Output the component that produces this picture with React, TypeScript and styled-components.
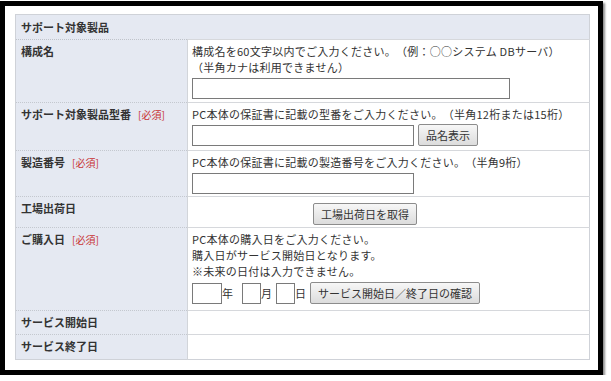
import React from "react";
import styled, { createGlobalStyle } from "styled-components";

const Global = createGlobalStyle`
  html, body { margin: 0; padding: 0; background: #fff; }
  body {
    font-family: "Noto Sans CJK JP", "Noto Sans", sans-serif;
    color: #333;
    font-size: 11px;
    text-spacing-trim: space-all;
  }
  * { box-sizing: border-box; }
`;

const Frame = styled.div`
  margin-top: 1px;
  width: 603px;
  height: 374px;
  border: 5px solid #000;
  box-shadow: 2px 2px 2px rgba(0, 0, 0, 0.45);
  background: #fff;
  padding: 8px 8px 10px 10px;
`;

const Table = styled.table`
  width: 575px;
  border-collapse: collapse;
  border: 1px solid #cfd2d8;
  font-size: 11px;
  line-height: 16px;
`;

const Row = styled.tr<{ $h: number }>`
  height: ${(p) => p.$h}px;
`;

const HeadCell = styled.th`
  background: #e5e9f2;
  text-align: left;
  font-weight: bold;
  padding: 0 5px 1px;
  border-bottom: 1px dotted #bfc3ca;
`;

const Label = styled.th`
  width: 172px;
  background: #e5e9f2;
  text-align: left;
  font-weight: bold;
  vertical-align: top;
  padding: 3px 5px 0;
  border-top: 1px dotted #c4c8cf;
  border-right: 1px solid #d2d5da;
  white-space: nowrap;
`;

const Value = styled.td<{ $middle?: boolean }>`
  background: #fff;
  vertical-align: ${(p) => (p.$middle ? "middle" : "top")};
  padding: 3px 4px 0;
  border-top: 1px solid #d6d8dc;
`;

const Req = styled.span`
  color: #c83232;
  font-weight: normal;
  font-size: 10px;
  margin-left: 7px;
`;

const Line = styled.div`
  white-space: nowrap;
  letter-spacing: 0.25px;
`;

const Controls = styled.div<{ $top?: number; $left?: number; $gap?: number }>`
  display: flex;
  align-items: center;
  gap: ${(p) => p.$gap ?? 4}px;
  margin-top: ${(p) => p.$top ?? 2}px;
  margin-left: ${(p) => p.$left ?? 0}px;
`;

const TextInput = styled.input<{ $w: number }>`
  width: ${(p) => p.$w}px;
  height: 21px;
  border: 1px solid #7a7a7a;
  background: #fff;
  margin: 0;
  padding: 0 2px;
  font: inherit;
  border-radius: 0;
  outline: none;
`;

const Btn = styled.button`
  height: 22px;
  padding: 0 7px;
  border: 1px solid #8c8c8c;
  border-radius: 2px;
  background: linear-gradient(#f7f7f7, #dcdcdc);
  color: #333;
  font-family: inherit;
  font-size: 11px;
  line-height: 20px;
  margin: 0;
`;

const Unit = styled.span<{ $after: number }>`
  width: 11px;
  margin-right: ${(p) => p.$after}px;
`;

export default function App() {
  return (
    <>
      <Global />
      <Frame>
        <Table>
          <tbody>
            <Row $h={25}>
              <HeadCell colSpan={2}>サポート対象製品</HeadCell>
            </Row>
            <Row $h={63}>
              <Label>構成名</Label>
              <Value>
                <Line>構成名を60文字以内でご入力ください。（例：○○システム DBサーバ）</Line>
                <Line>（半角カナは利用できません）</Line>
                <Controls $top={3}>
                  <TextInput $w={318} />
                </Controls>
              </Value>
            </Row>
            <Row $h={48}>
              <Label>
                サポート対象製品型番<Req>[必須]</Req>
              </Label>
              <Value>
                <Line>PC本体の保証書に記載の型番をご入力ください。（半角12桁または15桁）</Line>
                <Controls $top={2}>
                  <TextInput $w={222} />
                  <Btn>品名表示</Btn>
                </Controls>
              </Value>
            </Row>
            <Row $h={46}>
              <Label>
                製造番号<Req>[必須]</Req>
              </Label>
              <Value>
                <Line>PC本体の保証書に記載の製造番号をご入力ください。（半角9桁）</Line>
                <Controls $top={3}>
                  <TextInput $w={222} />
                </Controls>
              </Value>
            </Row>
            <Row $h={31}>
              <Label>工場出荷日</Label>
              <Value $middle>
                <Controls $top={0} $left={121}>
                  <Btn>工場出荷日を取得</Btn>
                </Controls>
              </Value>
            </Row>
            <Row $h={83}>
              <Label>
                ご購入日<Req>[必須]</Req>
              </Label>
              <Value>
                <Line>PC本体の購入日をご入力ください。</Line>
                <Line>購入日がサービス開始日となります。</Line>
                <Line>※未来の日付は入力できません。</Line>
                <Controls $top={3} $gap={0}>
                  <TextInput $w={30} />
                  <Unit $after={9}>年</Unit>
                  <TextInput $w={19} />
                  <Unit $after={4}>月</Unit>
                  <TextInput $w={19} />
                  <Unit $after={4}>日</Unit>
                  <Btn>サービス開始日／終了日の確認</Btn>
                </Controls>
              </Value>
            </Row>
            <Row $h={24}>
              <Label>サービス開始日</Label>
              <Value />
            </Row>
            <Row $h={25}>
              <Label>サービス終了日</Label>
              <Value />
            </Row>
          </tbody>
        </Table>
      </Frame>
    </>
  );
}
